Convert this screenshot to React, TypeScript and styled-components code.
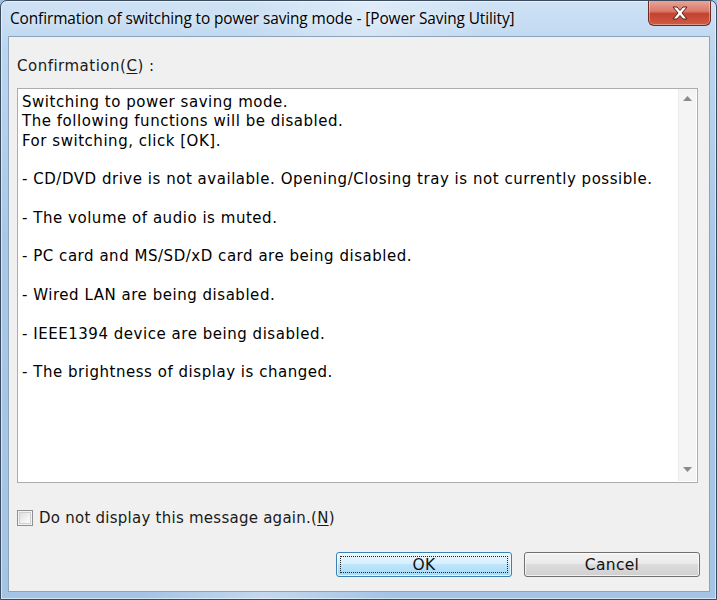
import React from "react";
import styled, { createGlobalStyle } from "styled-components";

const Global = createGlobalStyle`
  html, body { margin: 0; padding: 0; background: #9fbfe0; }
  * { box-sizing: border-box; }
`;

const UI_FONT = `"Open Sans", "Noto Sans", sans-serif`;
const BODY_FONT = `"DejaVu Sans", "Open Sans", sans-serif`;

const Frame = styled.div`
  width: 717px;
  height: 600px;
  display: flex;
  flex-direction: column;
  border: 1px solid #3b4b5e;
  border-radius: 7px 7px 0 0;
  background:
    linear-gradient(100deg, rgba(255,255,255,0) 30%, rgba(255,255,255,0.35) 45%, rgba(255,255,255,0) 60%),
    linear-gradient(180deg, #cfe2f5 0%, #bcd6ef 8%, #a9c8e8 40%, #a4c4e6 100%);
  box-shadow: inset 0 0 0 1px rgba(255,255,255,0.55);
  font-family: ${BODY_FONT};
  overflow: hidden;
`;

const TitleBar = styled.div`
  height: 35px;
  display: flex;
  align-items: flex-start;
  justify-content: space-between;
  padding-left: 9px;
`;

const TitleText = styled.div`
  font-family: ${UI_FONT};
  font-size: 15.4px;
  color: #000;
  margin-top: 7px;
  letter-spacing: -0.1px;
  text-shadow: 0 0 8px rgba(255,255,255,0.9);
  white-space: nowrap;
`;

const CloseButton = styled.div`
  width: 63px;
  height: 26px;
  margin-right: 5px;
  margin-top: -1px;
  border: 1px solid #6e2a22;
  border-top: none;
  border-radius: 0 0 6px 6px;
  background: linear-gradient(180deg, #e9a99b 0%, #d9786a 45%, #c4412f 55%, #cf5d46 100%);
  box-shadow: inset 0 0 0 1px rgba(255,255,255,0.35);
  display: flex;
  align-items: center;
  justify-content: center;
`;

const Client = styled.div`
  flex: 1;
  margin: 0 6px 7px 7px;
  border: 1px solid #8da3ba;
  background: #f0f0f0;
  display: flex;
  flex-direction: column;
  padding: 19px 11px 13px 8px;
`;

const Label = styled.div`
  height: 20px;
  font-size: 15px;
  letter-spacing: 0.5px;
  line-height: 20px;
  color: #1a1a1a;
`;

const U = styled.span`
  text-decoration: underline;
  text-underline-offset: 2px;
`;

const TextBox = styled.div`
  margin-top: 12px;
  height: 395px;
  border: 1px solid #abadb3;
  background: #fff;
  display: flex;
`;

const TextContent = styled.div`
  flex: 1;
  padding: 4px 4px;
  font-size: 15px;
  letter-spacing: 0.53px;
  line-height: 19.3px;
  color: #000;
`;

const Line = styled.div<{ $spaced?: boolean }>`
  margin-top: ${(p) => (p.$spaced ? "19.3px" : "0")};
  white-space: nowrap;
`;

const ScrollBar = styled.div`
  width: 18px;
  margin: 0 1px 1px 0;
  background: #f4f4f4;
  border-left: 1px solid #ececec;
  display: flex;
  flex-direction: column;
  justify-content: space-between;
  align-items: center;
  padding: 7px 0 9px;
`;

const CheckRow = styled.div`
  margin-top: 26px;
  height: 18px;
  display: flex;
  align-items: center;
  gap: 6px;
  font-size: 15px;
  letter-spacing: 0.25px;
  color: #1a1a1a;
`;

const CheckBox = styled.div`
  width: 16px;
  height: 16px;
  border: 1px solid #8f8f8f;
  background: linear-gradient(135deg, #d8d8d8 0%, #f4f4f4 60%, #ffffff 100%);
  box-shadow: inset 0 0 0 1px #f4f4f4, inset 0 0 0 2px #cfcfcf;
`;

const ButtonRow = styled.div`
  margin-top: 25px;
  margin-right: -2px;
  display: flex;
  justify-content: flex-end;
  gap: 12px;
`;

const Button = styled.div<{ $default?: boolean }>`
  width: 176px;
  height: 25px;
  border-radius: 3px;
  border: 1px solid ${(p) => (p.$default ? "#3c7fb1" : "#707070")};
  background: ${(p) =>
    p.$default
      ? "linear-gradient(180deg, #eaf6fd 0%, #d9f0fc 45%, #bee6fd 50%, #a7d9f5 100%)"
      : "linear-gradient(180deg, #f2f2f2 0%, #ebebeb 45%, #dddddd 50%, #cfcfcf 100%)"};
  box-shadow: inset 0 0 0 1px rgba(255,255,255,0.7);
  display: flex;
  align-items: center;
  justify-content: center;
  font-size: 15.5px;
  letter-spacing: 0.3px;
  color: #111;
  position: relative;
`;

const FocusRect = styled.div`
  position: absolute;
  inset: 3px;
  border: 1px dotted #222;
`;

const Arrow = ({ up }: { up?: boolean }) => (
  <svg width="9" height="5" viewBox="0 0 9 5">
    <polygon points={up ? "0,5 9,5 4.5,0" : "0,0 9,0 4.5,5"} fill="#8a8a8a" />
  </svg>
);

const CloseX = () => (
  <svg width="20" height="16" viewBox="0 0 20 16">
    <path
      d="M3 2 L7 2 L10 5.5 L13 2 L17 2 L12 8 L17 14 L13 14 L10 10.5 L7 14 L3 14 L8 8 Z"
      fill="#ffffff"
      stroke="#5a1f17"
      strokeWidth="1"
      strokeLinejoin="round"
    />
  </svg>
);

const items = [
  "- CD/DVD drive is not available. Opening/Closing tray is not currently possible.",
  "- The volume of audio is muted.",
  "- PC card and MS/SD/xD card are being disabled.",
  "- Wired LAN are being disabled.",
  "- IEEE1394 device are being disabled.",
  "- The brightness of display is changed.",
];

export default function App() {
  return (
    <>
      <Global />
      <Frame>
        <TitleBar>
          <TitleText>
            Confirmation of switching to power saving mode - [Power Saving Utility]
          </TitleText>
          <CloseButton>
            <CloseX />
          </CloseButton>
        </TitleBar>
        <Client>
          <Label>
            Confirmation(<U>C</U>) :
          </Label>
          <TextBox>
            <TextContent>
              <Line>Switching to power saving mode.</Line>
              <Line>The following functions will be disabled.</Line>
              <Line>For switching, click [OK].</Line>
              {items.map((t) => (
                <Line key={t} $spaced>
                  {t}
                </Line>
              ))}
            </TextContent>
            <ScrollBar>
              <Arrow up />
              <Arrow />
            </ScrollBar>
          </TextBox>
          <CheckRow>
            <CheckBox />
            <span>
              Do not display this message again.(<U>N</U>)
            </span>
          </CheckRow>
          <ButtonRow>
            <Button $default>
              <FocusRect />
              OK
            </Button>
            <Button>Cancel</Button>
          </ButtonRow>
        </Client>
      </Frame>
    </>
  );
}
